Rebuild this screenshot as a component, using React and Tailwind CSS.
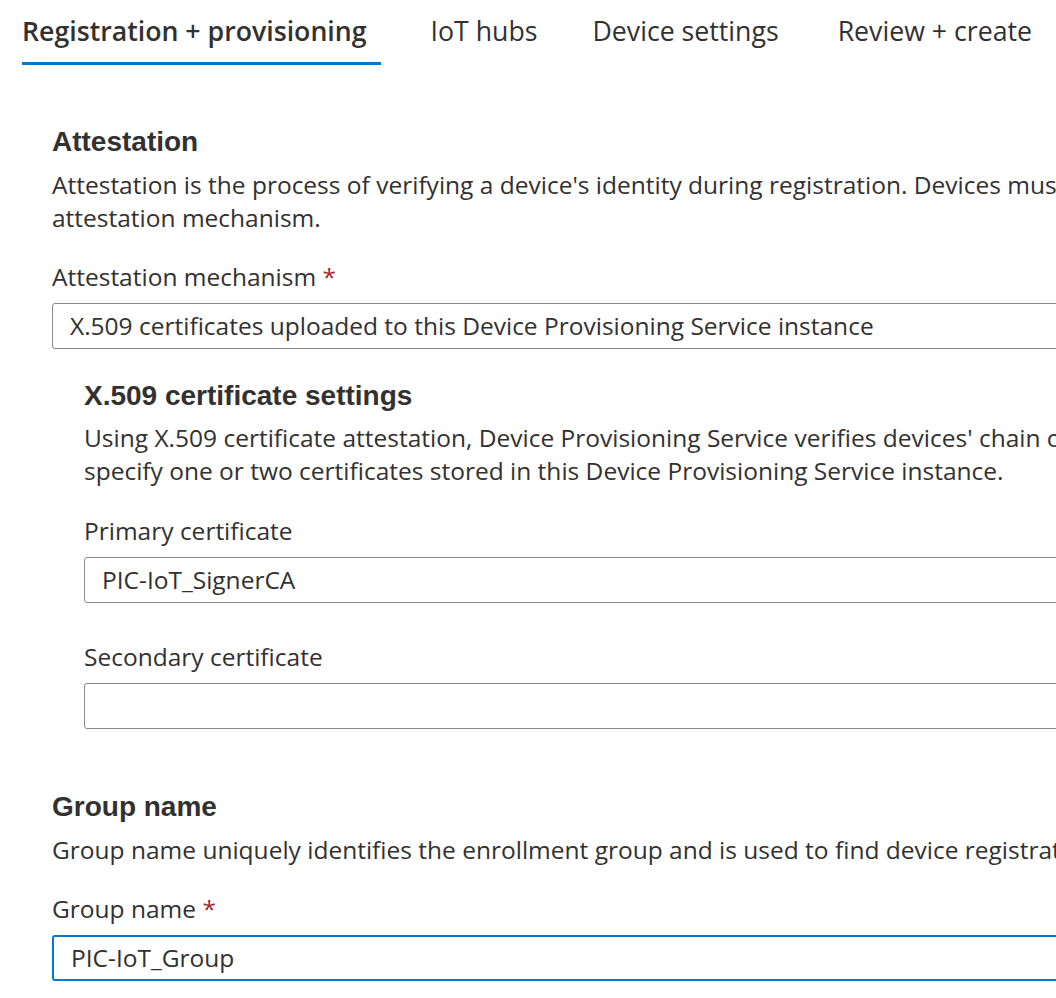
import React from "react";

const body = { fontFamily: '"Open Sans", "Noto Sans", sans-serif' };
const head = { fontFamily: '"Liberation Sans", Arial, sans-serif' };

const Tab = ({ label, active, className }) => (
  <div className={`flex flex-col ${className}`}>
    <span
      className={`text-[26.7px] leading-[62px] whitespace-nowrap ${active ? "font-semibold pr-[14px]" : ""}`}
    >
      {label}
    </span>
    <div className={`h-[3px] ${active ? "bg-[#0078d4]" : "bg-transparent"}`} />
  </div>
);

const Label = ({ children, required }) => (
  <div className="text-[24.5px] leading-[32px] whitespace-nowrap">
    {children}
    {required && <span className="text-[#a4262c]"> *</span>}
  </div>
);

const Field = ({ value, focused }) => (
  <div
    className={`h-[46px] w-[1200px] rounded-[3px] flex items-center px-[17px] text-[24.5px] whitespace-nowrap ${
      focused ? "border-2 border-[#0078d4]" : "border border-[#8a8886]"
    }`}
  >
    {value}
  </div>
);

export default function App() {
  return (
    <div className="w-full h-[998px] overflow-hidden bg-white text-[#323130]" style={body}>
      {/* tabs */}
      <div className="flex items-end pl-[22px]">
        <Tab label="Registration + provisioning" active />
        <Tab label="IoT hubs" className="ml-[50px]" />
        <Tab label="Device settings" className="ml-[55px]" />
        <Tab label="Review + create" className="ml-[59px]" />
      </div>

      <div className="pl-[52px] pt-[60px] w-[1600px]">
        {/* Attestation */}
        <h2 className="text-[28px] font-bold leading-[34px]" style={head}>
          Attestation
        </h2>
        <p className="text-[24.5px] leading-[33px] mt-[9px] whitespace-nowrap">
          Attestation is the process of verifying a device's identity during registration. Devices must use the
          selected
          <br />
          attestation mechanism.
        </p>
        <div className="mt-[27px]">
          <Label required>Attestation mechanism</Label>
        </div>
        <div className="mt-[10px]">
          <Field value="X.509 certificates uploaded to this Device Provisioning Service instance" />
        </div>

        {/* X.509 settings */}
        <div className="pl-[32px] mt-[30px]">
          <h3 className="text-[28px] font-bold leading-[34px]" style={head}>
            X.509 certificate settings
          </h3>
          <p className="text-[24.5px] leading-[33px] mt-[8px] whitespace-nowrap">
            Using X.509 certificate attestation, Device Provisioning Service verifies devices' chain of trust. You can
            <br />
            specify one or two certificates stored in this Device Provisioning Service instance.
          </p>
          <div className="mt-[28px]">
            <Label>Primary certificate</Label>
          </div>
          <div className="mt-[10px]">
            <Field value="PIC-IoT_SignerCA" />
          </div>
          <div className="mt-[38px]">
            <Label>Secondary certificate</Label>
          </div>
          <div className="mt-[10px]">
            <Field value="" />
          </div>
        </div>

        {/* Group name */}
        <h2 className="text-[28px] font-bold leading-[34px] mt-[61px]" style={head}>
          Group name
        </h2>
        <p className="text-[24.5px] leading-[33px] mt-[9px] whitespace-nowrap">
          Group name uniquely identifies the enrollment group and is used to find device registration records.
        </p>
        <div className="mt-[27px]">
          <Label required>Group name</Label>
        </div>
        <div className="mt-[10px]">
          <Field value="PIC-IoT_Group" focused />
        </div>
      </div>
    </div>
  );
}
